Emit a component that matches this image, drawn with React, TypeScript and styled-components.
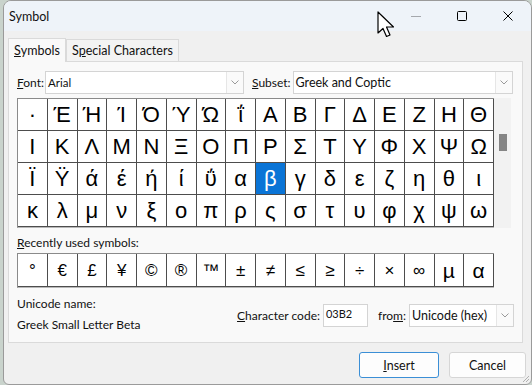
import styled, { createGlobalStyle } from "styled-components";

const GlobalStyle = createGlobalStyle`
  html, body {
    margin: 0;
    padding: 0;
    background: #c9d3cc;
    font-family: "Segoe UI", Lato, "Noto Sans", sans-serif;
  }
`;

const Window = styled.div`
  position: relative;
  box-sizing: border-box;
  width: 529px;
  height: 385px;
  margin-left: 3px;
  background: #f0f0f0;
  border: 1px solid #9a9a9a;
  border-radius: 8px 8px 6px 6px;
  overflow: hidden;
  display: flex;
  flex-direction: column;
  font-size: 12px;
  color: #111;
`;

const TitleBar = styled.div`
  height: 30px;
  flex: none;
  background: #eef3f9;
  display: flex;
  align-items: center;
  padding-left: 5px;
`;

const Title = styled.div`
  flex: 1;
  font-size: 12.5px;
`;

const Controls = styled.div`
  display: flex;
  align-items: center;
  height: 100%;
`;

const ControlButton = styled.div<{ $faded?: boolean }>`
  width: 46px;
  height: 100%;
  display: flex;
  align-items: center;
  justify-content: center;
  opacity: ${(p) => (p.$faded ? 0.3 : 1)};
`;

const Content = styled.div`
  flex: 1;
  display: flex;
  flex-direction: column;
  padding: 7px 5px 0 4px;
`;

const Tabs = styled.div`
  display: flex;
  align-items: flex-end;
  height: 23px;
`;

const Tab = styled.div<{ $active?: boolean }>`
  box-sizing: border-box;
  height: ${(p) => (p.$active ? "24px" : "22px")};
  padding: 0 5px;
  display: flex;
  align-items: center;
  font-size: 12.5px;
  background: ${(p) => (p.$active ? "#f9f9f9" : "#f3f3f3")};
  border: 1px solid #dadada;
  border-bottom: none;
  margin-bottom: ${(p) => (p.$active ? "-1px" : "0")};
  position: relative;
  z-index: ${(p) => (p.$active ? 1 : 0)};
`;

const Panel = styled.div`
  box-sizing: border-box;
  width: 515px;
  height: 282px;
  background: #f9f9f9;
  border: 1px solid #dadada;
  padding: 9px 0 0 8px;
  display: flex;
  flex-direction: column;
`;

const Row = styled.div`
  display: flex;
  align-items: center;
`;

const Label = styled.span<{ $before?: number; $after?: number }>`
  margin-right: ${(p) => p.$after ?? 3}px;
  margin-left: ${(p) => p.$before ?? 0}px;
  white-space: nowrap;
`;

const Key = styled.span`
  text-decoration: underline;
`;

const Combo = styled.div<{ $w: number }>`
  box-sizing: border-box;
  width: ${(p) => p.$w}px;
  height: 23px;
  background: #fff;
  border: 1px solid #d4d4d4;
  display: flex;
  align-items: stretch;
`;

const ComboText = styled.div<{ $small?: boolean }>`
  flex: 1;
  display: flex;
  align-items: center;
  padding-left: 2px;
  font-size: ${(p) => (p.$small ? "11.5px" : "12.5px")};
`;

const ComboArrow = styled.div`
  width: 16px;
  border-left: 1px solid #e6e6e6;
  background: #fafafa;
  display: flex;
  align-items: center;
  justify-content: center;
`;

const GridArea = styled.div`
  display: flex;
  margin-top: 4px;
`;

const SymbolGrid = styled.div<{ $rowH: number }>`
  box-sizing: border-box;
  width: 477px;
  display: grid;
  grid-template-columns: repeat(16, 1fr);
  grid-auto-rows: ${(p) => p.$rowH}px;
  border-top: 1px solid #8a8a8a;
  border-left: 1px solid #8a8a8a;
  border-bottom: 1px solid #b8b8b8;
  background: #fff;
`;

const Cell = styled.div<{ $selected?: boolean; $size: number }>`
  border-right: 1px solid #4d4d4d;
  border-bottom: 1px solid #4d4d4d;
  display: flex;
  align-items: center;
  justify-content: center;
  font-family: "Liberation Sans", Arial, sans-serif;
  font-size: ${(p) => p.$size}px;
  color: ${(p) => (p.$selected ? "#fff" : "#000")};
  background: ${(p) => (p.$selected ? "#0a74d6" : "#fff")};
  line-height: 1;
`;

const Scrollbar = styled.div`
  width: 17px;
  height: 130px;
  background: #f2f2f2;
  display: flex;
  justify-content: center;
  padding-top: 36px;
  box-sizing: border-box;
`;

const Thumb = styled.div`
  width: 8px;
  height: 17px;
  background: #858585;
`;

const SectionLabel = styled.div`
  margin-top: 7px;
  margin-bottom: 3px;
`;

const InfoArea = styled.div`
  display: flex;
  margin-top: 8px;
  width: 497px;
`;

const NameCol = styled.div`
  display: flex;
  flex-direction: column;
  gap: 6px;
  flex: 1;
`;

const CodeRow = styled.div`
  display: flex;
  align-items: center;
  margin-top: 3px;
`;

const CodeInput = styled.div`
  box-sizing: border-box;
  width: 45px;
  height: 23px;
  background: #fff;
  border: 1px solid #d4d4d4;
  font-size: 11px;
  padding: 2px 0 0 2px;
  margin-right: 10px;
`;

const Footer = styled.div`
  display: flex;
  justify-content: flex-end;
  gap: 10px;
  margin-top: 9px;
`;

const Button = styled.div<{ $primary?: boolean }>`
  box-sizing: border-box;
  width: ${(p) => (p.$primary ? 80 : 77)}px;
  height: 26px;
  display: flex;
  align-items: center;
  justify-content: center;
  background: #fdfdfd;
  border: 1px solid ${(p) => (p.$primary ? "#3b8fd6" : "#d6d6d6")};
  border-radius: 3px;
  font-size: 12.5px;
`;

const Cursor = styled.svg`
  position: absolute;
  left: 373px;
  top: 10px;
`;

const Grip = styled.svg`
  position: absolute;
  right: 1px;
  bottom: 1px;
`;

const rows = [
  "·ΈΉΊΌΎΏΐΑΒΓΔΕΖΗΘ",
  "ΙΚΛΜΝΞΟΠΡΣΤΥΦΧΨΩ",
  "ΪΫάέήίΰαβγδεζηθι",
  "κλμνξοπρςστυφχψω",
];

const recent = ["°", "€", "£", "¥", "©", "®", "™", "±", "≠", "≤", "≥", "÷", "×", "∞", "µ", "α"];

function Chevron() {
  return (
    <svg width="8" height="5" viewBox="0 0 8 5">
      <path d="M0.5 0.5 L4 4 L7.5 0.5" fill="none" stroke="#9a9a9a" strokeWidth="1" />
    </svg>
  );
}

export default function App() {
  return (
    <>
      <GlobalStyle />
      <Window>
        <TitleBar>
          <Title>Symbol</Title>
          <Controls>
            <ControlButton $faded>
              <svg width="10" height="10" viewBox="0 0 10 10">
                <path d="M0 5.5 H10" stroke="#000" strokeWidth="1" />
              </svg>
            </ControlButton>
            <ControlButton>
              <svg width="10" height="10" viewBox="0 0 10 10">
                <rect x="0.5" y="0.5" width="9" height="9" rx="1" fill="none" stroke="#000" strokeWidth="1" />
              </svg>
            </ControlButton>
            <ControlButton>
              <svg width="10" height="10" viewBox="0 0 10 10">
                <path d="M0.5 0.5 L9.5 9.5 M9.5 0.5 L0.5 9.5" stroke="#000" strokeWidth="1" />
              </svg>
            </ControlButton>
          </Controls>
        </TitleBar>
        <Content>
          <Tabs>
            <Tab $active>
              <Key>S</Key>ymbols
            </Tab>
            <Tab>
              S<Key>p</Key>ecial Characters
            </Tab>
          </Tabs>
          <Panel>
            <Row>
              <Label $after={1}>
                <Key>F</Key>ont:
              </Label>
              <Combo $w={199}>
                <ComboText $small>Arial</ComboText>
                <ComboArrow>
                  <Chevron />
                </ComboArrow>
              </Combo>
              <Label $before={8} $after={2}>
                <Key>S</Key>ubset:
              </Label>
              <Combo $w={220}>
                <ComboText>Greek and Coptic</ComboText>
                <ComboArrow>
                  <Chevron />
                </ComboArrow>
              </Combo>
            </Row>
            <GridArea>
              <SymbolGrid $rowH={32}>
                {rows.map((r, ri) =>
                  Array.from(r).map((ch, ci) => (
                    <Cell key={`${ri}-${ci}`} $size={22} $selected={ri === 2 && ci === 8}>
                      {ch}
                    </Cell>
                  ))
                )}
              </SymbolGrid>
              <Scrollbar>
                <Thumb />
              </Scrollbar>
            </GridArea>
            <SectionLabel>
              <Key>R</Key>ecently used symbols:
            </SectionLabel>
            <SymbolGrid $rowH={33}>
              {recent.map((ch, i) => (
                <Cell key={i} $size={i >= 14 ? 21 : 17}>
                  {ch}
                </Cell>
              ))}
            </SymbolGrid>
            <InfoArea>
              <NameCol>
                <div>Unicode name:</div>
                <div>Greek Small Letter Beta</div>
              </NameCol>
              <CodeRow>
                <Label>
                  <Key>C</Key>haracter code:
                </Label>
                <CodeInput>03B2</CodeInput>
                <Label>
                  fro<Key>m</Key>:
                </Label>
                <Combo $w={105}>
                  <ComboText>Unicode (hex)</ComboText>
                  <ComboArrow>
                    <Chevron />
                  </ComboArrow>
                </Combo>
              </CodeRow>
            </InfoArea>
          </Panel>
          <Footer>
            <Button $primary>
              <span>
                <Key>I</Key>nsert
              </span>
            </Button>
            <Button>Cancel</Button>
          </Footer>
        </Content>
        <Cursor width="20" height="28" viewBox="0 0 20 28">
          <path
            d="M1 1 L1 22 L6 17.5 L9.5 25.5 L13 24 L9.5 16 L16.5 16 Z"
            fill="#fff"
            stroke="#000"
            strokeWidth="1.2"
            strokeLinejoin="round"
          />
        </Cursor>
        <Grip width="10" height="10" viewBox="0 0 10 10">
          <path d="M9 3 L3 9 M9 6 L6 9" stroke="#b0b0b0" strokeWidth="1" />
        </Grip>
      </Window>
    </>
  );
}
